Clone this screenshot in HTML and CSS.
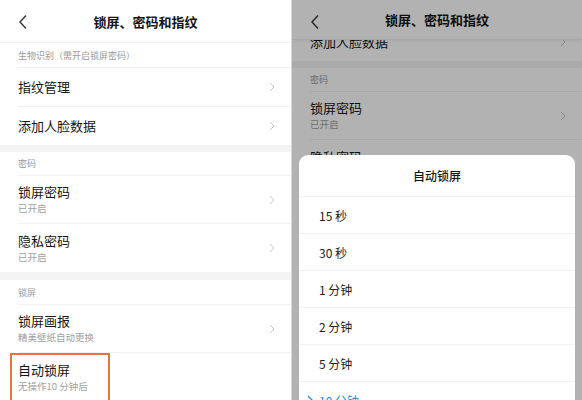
FILE: index.html
```html
<!DOCTYPE html>
<html lang="zh">
<head>
<meta charset="utf-8">
<link rel="stylesheet" href="styles.css">
</head>
<body>
<div class="screens">
  <section class="phone">
    <header class="bar">
      <svg class="back" width="10" height="16" viewBox="0 0 10 16"><polyline points="8,1.5 2,8 8,14.5" fill="none" stroke="#333" stroke-width="1.4"/></svg>
      <h1 class="title">锁屏、密码和指纹</h1>
    </header>
    <div class="list">
      <div class="label">生物识别（需开启锁屏密码）</div>
      <div class="item"><div class="texts"><span class="name">指纹管理</span></div><svg class="chev" width="6" height="10" viewBox="0 0 6 10"><polyline points="1,1 5,5 1,9" fill="none" stroke="#c6c6c6" stroke-width="1"/></svg></div>
      <div class="item last"><div class="texts"><span class="name">添加人脸数据</span></div><svg class="chev" width="6" height="10" viewBox="0 0 6 10"><polyline points="1,1 5,5 1,9" fill="none" stroke="#c6c6c6" stroke-width="1"/></svg></div>
      <div class="gap"></div>
      <div class="label short">密码</div>
      <div class="item double"><div class="texts"><span class="name">锁屏密码</span><span class="sub">已开启</span></div><svg class="chev" width="6" height="10" viewBox="0 0 6 10"><polyline points="1,1 5,5 1,9" fill="none" stroke="#c6c6c6" stroke-width="1"/></svg></div>
      <div class="item double last"><div class="texts"><span class="name">隐私密码</span><span class="sub">已开启</span></div><svg class="chev" width="6" height="10" viewBox="0 0 6 10"><polyline points="1,1 5,5 1,9" fill="none" stroke="#c6c6c6" stroke-width="1"/></svg></div>
      <div class="gap wide"></div>
      <div class="label">锁屏</div>
      <div class="item double"><div class="texts"><span class="name">锁屏画报</span><span class="sub">精美壁纸自动更换</span></div><svg class="chev" width="6" height="10" viewBox="0 0 6 10"><polyline points="1,1 5,5 1,9" fill="none" stroke="#c6c6c6" stroke-width="1"/></svg></div>
      <div class="item double last marked"><div class="texts"><span class="name">自动锁屏</span><span class="sub">无操作10 分钟后</span></div><span class="highlight"></span></div>
    </div>
  </section>

  <section class="phone">
    <header class="bar raised">
      <svg class="back" width="10" height="16" viewBox="0 0 10 16"><polyline points="8,1.5 2,8 8,14.5" fill="none" stroke="#333" stroke-width="1.4"/></svg>
      <h1 class="title">锁屏、密码和指纹</h1>
    </header>
    <div class="list scrolled">
      <div class="label">生物识别（需开启锁屏密码）</div>
      <div class="item"><div class="texts"><span class="name">指纹管理</span></div><svg class="chev" width="6" height="10" viewBox="0 0 6 10"><polyline points="1,1 5,5 1,9" fill="none" stroke="#c6c6c6" stroke-width="1"/></svg></div>
      <div class="item last"><div class="texts"><span class="name">添加人脸数据</span></div><svg class="chev" width="6" height="10" viewBox="0 0 6 10"><polyline points="1,1 5,5 1,9" fill="none" stroke="#c6c6c6" stroke-width="1"/></svg></div>
      <div class="gap"></div>
      <div class="label short">密码</div>
      <div class="item double"><div class="texts"><span class="name">锁屏密码</span><span class="sub">已开启</span></div><svg class="chev" width="6" height="10" viewBox="0 0 6 10"><polyline points="1,1 5,5 1,9" fill="none" stroke="#c6c6c6" stroke-width="1"/></svg></div>
      <div class="item double last"><div class="texts"><span class="name">隐私密码</span><span class="sub">已开启</span></div><svg class="chev" width="6" height="10" viewBox="0 0 6 10"><polyline points="1,1 5,5 1,9" fill="none" stroke="#c6c6c6" stroke-width="1"/></svg></div>
    </div>
    <div class="dim"></div>
    <div class="sheet">
      <div class="sheet-title">自动锁屏</div>
      <div class="option">15 秒</div>
      <div class="option">30 秒</div>
      <div class="option">1 分钟</div>
      <div class="option">2 分钟</div>
      <div class="option">5 分钟</div>
      <div class="option selected"><svg class="tick" width="6" height="10" viewBox="0 0 6 10"><polyline points="1,1 5,5 1,9" fill="none" stroke="#1e90e6" stroke-width="1.4"/></svg>10 分钟</div>
    </div>
  </section>
</div>
</body>
</html>
```

FILE: styles.css
```css
* { box-sizing: border-box; }
html, body { margin: 0; padding: 0; }
body {
  width: 582px;
  height: 400px;
  overflow: hidden;
  background: #fff;
  font-family: "Noto Sans CJK SC", "Noto Sans", "Liberation Sans", sans-serif;
  color: #1c1c1c;
}
.screens {
  display: flex;
  gap: 1px;
  background: #d8d8d8;
  height: 400px;
}
.phone {
  position: relative;
  width: 291px;
  height: 400px;
  overflow: hidden;
  background: #fff;
  flex: none;
}
.phone + .phone { width: 290px; }
.bar {
  position: relative;
  height: 43px;
  display: flex;
  align-items: center;
  justify-content: center;
  border-bottom: 1px solid #f0f0f0;
  background: #fff;
}
.bar.raised {
  z-index: 1;
  box-shadow: 0 1px 3px rgba(0,0,0,0.06);
  height: 40px;
}
.back {
  position: absolute;
  left: 18px;
  top: 14px;
}
.title {
  margin: 0;
  font-size: 13px;
  font-weight: 600;
  color: #151515;
}
.list { display: flex; flex-direction: column; }
.list.scrolled { margin-top: -81px; }
.label {
  height: 25px;
  margin-left: 18px;
  display: flex;
  align-items: center;
  font-size: 9px;
  color: #9a9a9a;
  border-bottom: 1px solid #f0f0f0;
}
.label.short { height: 24px; }
.item {
  position: relative;
  height: 39px;
  margin-left: 18px;
  padding-right: 16px;
  display: flex;
  align-items: center;
  justify-content: space-between;
  border-bottom: 1px solid #f0f0f0;
}
.item.last { border-bottom: none; height: 38px; }
.item.double { height: 48px; }
.texts { display: flex; flex-direction: column; gap: 2px; }
.name { font-size: 13px; line-height: 16px; color: #151515; }
.sub { font-size: 9.5px; line-height: 13px; color: #a0a0a0; }
.chev { flex: none; }
.gap { height: 7px; background: #f4f4f4; }
.gap.wide { height: 8px; }
.highlight {
  position: absolute;
  left: -8px;
  top: 0;
  width: 100px;
  height: 52px;
  border: 2px solid #e8733e;
}
.dim {
  position: absolute;
  inset: 0;
  background: rgba(0,0,0,0.3);
  z-index: 2;
}
.sheet {
  position: absolute;
  left: 7px;
  right: 7px;
  top: 155px;
  bottom: -20px;
  background: #fff;
  border-radius: 9px 9px 0 0;
  z-index: 3;
  display: flex;
  flex-direction: column;
}
.sheet-title {
  height: 41px;
  display: flex;
  align-items: center;
  justify-content: center;
  font-size: 12px;
  font-weight: 500;
  color: #151515;
}
.option {
  position: relative;
  height: 37px;
  flex: none;
  display: flex;
  align-items: center;
  padding-left: 20px;
  font-size: 12px;
  color: #222;
  border-top: 1px solid #f2f2f2;
}
.option.selected { color: #1e90e6; }
.tick {
  position: absolute;
  left: 8px;
  top: 13px;
}
```
